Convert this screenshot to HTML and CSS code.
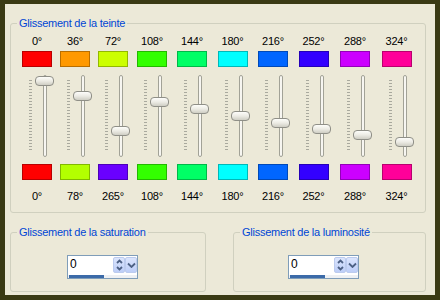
FILE: index.html
```html
<!DOCTYPE html>
<html>
	<head>
		<meta charset="utf-8">
		<title>Glissement des couleurs</title>
		<link rel="stylesheet" href="styles.css">
	</head>
	<body>
		<div class="window">
			<fieldset class="group hue">
				<legend>Glissement de la teinte</legend>
				<div class="channels">
					<div class="chan">
						<span class="deg">0°</span>
						<span class="swatch" style="background:hsl(0,100%,50%)"></span>
						<div class="slider"><span class="thumb" style="top:1px"></span></div>
						<span class="swatch" style="background:hsl(0,100%,50%)"></span>
						<span class="deg">0°</span>
					</div>
					<div class="chan">
						<span class="deg">36°</span>
						<span class="swatch" style="background:hsl(36,100%,50%)"></span>
						<div class="slider"><span class="thumb" style="top:16px"></span></div>
						<span class="swatch" style="background:hsl(78,100%,50%)"></span>
						<span class="deg">78°</span>
					</div>
					<div class="chan">
						<span class="deg">72°</span>
						<span class="swatch" style="background:hsl(72,100%,50%)"></span>
						<div class="slider"><span class="thumb" style="top:51px"></span></div>
						<span class="swatch" style="background:hsl(265,100%,50%)"></span>
						<span class="deg">265°</span>
					</div>
					<div class="chan">
						<span class="deg">108°</span>
						<span class="swatch" style="background:hsl(108,100%,50%)"></span>
						<div class="slider"><span class="thumb" style="top:22px"></span></div>
						<span class="swatch" style="background:hsl(108,100%,50%)"></span>
						<span class="deg">108°</span>
					</div>
					<div class="chan">
						<span class="deg">144°</span>
						<span class="swatch" style="background:hsl(144,100%,50%)"></span>
						<div class="slider"><span class="thumb" style="top:29px"></span></div>
						<span class="swatch" style="background:hsl(144,100%,50%)"></span>
						<span class="deg">144°</span>
					</div>
					<div class="chan">
						<span class="deg">180°</span>
						<span class="swatch" style="background:hsl(180,100%,50%)"></span>
						<div class="slider"><span class="thumb" style="top:36px"></span></div>
						<span class="swatch" style="background:hsl(180,100%,50%)"></span>
						<span class="deg">180°</span>
					</div>
					<div class="chan">
						<span class="deg">216°</span>
						<span class="swatch" style="background:hsl(216,100%,50%)"></span>
						<div class="slider"><span class="thumb" style="top:43px"></span></div>
						<span class="swatch" style="background:hsl(216,100%,50%)"></span>
						<span class="deg">216°</span>
					</div>
					<div class="chan">
						<span class="deg">252°</span>
						<span class="swatch" style="background:hsl(252,100%,50%)"></span>
						<div class="slider"><span class="thumb" style="top:49px"></span></div>
						<span class="swatch" style="background:hsl(252,100%,50%)"></span>
						<span class="deg">252°</span>
					</div>
					<div class="chan">
						<span class="deg">288°</span>
						<span class="swatch" style="background:hsl(288,100%,50%)"></span>
						<div class="slider"><span class="thumb" style="top:55px"></span></div>
						<span class="swatch" style="background:hsl(288,100%,50%)"></span>
						<span class="deg">288°</span>
					</div>
					<div class="chan">
						<span class="deg">324°</span>
						<span class="swatch" style="background:hsl(324,100%,50%)"></span>
						<div class="slider"><span class="thumb" style="top:62px"></span></div>
						<span class="swatch" style="background:hsl(324,100%,50%)"></span>
						<span class="deg">324°</span>
					</div>
				</div>
			</fieldset>

			<div class="row">
				<fieldset class="group sat">
					<legend>Glissement de la saturation</legend>
					<div class="spin-wrap">
						<div class="spin">
							<div class="spin-field">
								<span class="spin-value">0</span>
								<span class="spin-updown">
									<svg width="7" height="5" viewBox="0 0 7 5"><polyline points="1,4 3.5,1.5 6,4" /></svg>
									<svg width="7" height="5" viewBox="0 0 7 5"><polyline points="1,1 3.5,3.5 6,1" /></svg>
								</span>
								<span class="spin-drop">
									<svg width="9" height="6" viewBox="0 0 9 6"><polyline points="1,1.5 4.5,5 8,1.5" /></svg>
								</span>
							</div>
							<div class="spin-bar"><span class="spin-fill"></span></div>
						</div>
					</div>
				</fieldset>
				<fieldset class="group lum">
					<legend>Glissement de la luminosité</legend>
					<div class="spin-wrap">
						<div class="spin">
							<div class="spin-field">
								<span class="spin-value">0</span>
								<span class="spin-updown">
									<svg width="7" height="5" viewBox="0 0 7 5"><polyline points="1,4 3.5,1.5 6,4" /></svg>
									<svg width="7" height="5" viewBox="0 0 7 5"><polyline points="1,1 3.5,3.5 6,1" /></svg>
								</span>
								<span class="spin-drop">
									<svg width="9" height="6" viewBox="0 0 9 6"><polyline points="1,1.5 4.5,5 8,1.5" /></svg>
								</span>
							</div>
							<div class="spin-bar"><span class="spin-fill"></span></div>
						</div>
					</div>
				</fieldset>
			</div>
		</div>
	</body>
</html>
```

FILE: styles.css
```css
body {
	margin: 0;
	background-color: #3a3a14;
	font-family: "Liberation Sans", Arial, sans-serif;
	font-size: 11px;
	letter-spacing: -0.25px;
	color: #000;
}

.window {
	margin: 4px 5px 5px 5px;
	height: 291px;
	box-sizing: border-box;
	padding: 13px 9px 0 5px;
	background-color: #ece9d8;
}

.group {
	margin: 0;
	padding: 0;
	border: 1px solid #d0d0bf;
	border-radius: 3px;
	min-width: 0;
}

.group legend {
	margin-left: 6px;
	padding: 0 2px;
	line-height: 13px;
	white-space: nowrap;
	color: #0046d5;
}

/* colonnes de teinte */
.channels {
	display: grid;
	grid-template-columns: 38px 38px 38px 40px 40px 41px 40px 41px 42px 41px;
	margin-left: 7px;
	padding: 5px 0 9px 0;
}

.chan {
	display: flex;
	flex-direction: column;
	align-items: center;
}

.deg {
	display: block;
	height: 13px;
	line-height: 13px;
	white-space: nowrap;
}

.swatch {
	display: block;
	width: 30px;
	height: 16px;
	box-sizing: border-box;
	border: 1px solid rgba(0, 0, 0, 0.28);
	margin-top: 3px;
}

.slider {
	position: relative;
	width: 30px;
	height: 82px;
	margin: 8px 0 7px 0;
}

.slider + .swatch {
	margin-top: 0;
}

.swatch + .deg {
	margin-top: 10px;
}

/* graduations */
.slider::before {
	content: "";
	position: absolute;
	left: 7px;
	top: 5px;
	width: 3px;
	height: 71px;
	background: repeating-linear-gradient(to bottom, #a9a99e 0 1px, transparent 1px 3px);
}

/* rail */
.slider::after {
	content: "";
	position: absolute;
	left: 21px;
	top: 0;
	width: 4px;
	height: 82px;
	box-sizing: border-box;
	border: 1px solid #a2a297;
	border-radius: 2px;
	background-color: #f7f6f1;
}

.thumb {
	position: absolute;
	left: 13px;
	width: 19px;
	height: 10px;
	box-sizing: border-box;
	border: 1px solid #8f8f87;
	border-radius: 4px;
	background: linear-gradient(to bottom, #fdfdfa, #ecebe4 50%, #cfcec4);
	z-index: 1;
}

/* ligne du bas */
.row {
	display: flex;
	gap: 27px;
	margin-top: 13px;
}

.sat {
	width: 196px;
	box-sizing: border-box;
}

.lum {
	width: 193px;
	box-sizing: border-box;
}

.spin-wrap {
	padding: 16px 0 12px 56px;
}

.lum .spin-wrap {
	padding-left: 54px;
}

.spin {
	display: flex;
	flex-direction: column;
	width: 71px;
	height: 24px;
	box-sizing: border-box;
	border: 1px solid #7f9db9;
	background-color: #fff;
}

.spin-field {
	display: flex;
	height: 19px;
	box-sizing: border-box;
	padding: 1px 0 2px 1px;
}

.spin-value {
	flex: 1;
	padding-left: 1px;
	font-size: 12px;
	line-height: 14px;
	letter-spacing: 0;
}

.spin-updown,
.spin-drop {
	display: flex;
	flex-direction: column;
	align-items: center;
	justify-content: center;
	width: 12px;
	box-sizing: border-box;
	border: 1px solid #bccbee;
	border-radius: 2px;
	background: linear-gradient(to bottom, #dbe5fd, #bdcef8);
}

.spin-updown {
	justify-content: space-around;
}

.spin svg polyline {
	fill: none;
	stroke: #4d6185;
	stroke-width: 1.8;
}

.spin-bar {
	height: 3px;
	padding-left: 1px;
	background-color: #eef0f3;
}

.spin-fill {
	display: block;
	width: 35px;
	height: 3px;
	background-color: #3b6aa8;
}
```
